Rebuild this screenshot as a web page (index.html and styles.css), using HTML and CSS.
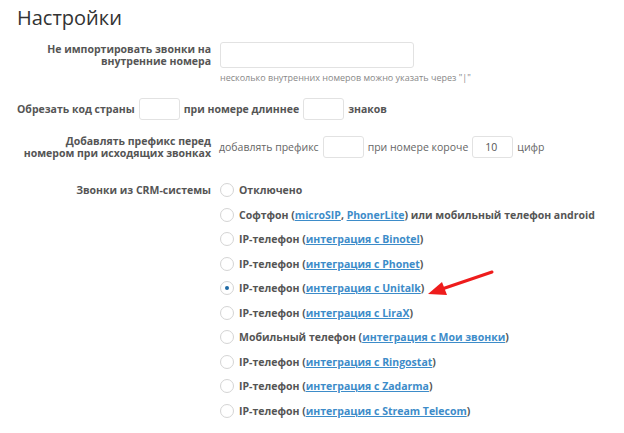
FILE: index.html
```html
<!DOCTYPE html>
<html lang="ru">
<head>
<meta charset="utf-8">
<title>Настройки</title>
<link rel="stylesheet" href="styles.css">
</head>
<body>
<div class="page">
  <h1 class="title">Настройки</h1>

  <div class="row row-first">
    <div class="label">Не импортировать звонки на<br>внутренние номера</div>
    <div class="field">
      <input class="inp inp-wide" type="text">
    </div>
  </div>
  <div class="hint">несколько внутренних номеров можно указать через "|"</div>

  <div class="row row-trim">
    <div class="inline">
      <span class="blabel">Обрезать код страны</span>
      <input class="inp inp-small" type="text">
      <span class="blabel">при номере длиннее</span>
      <input class="inp inp-small" type="text">
      <span class="blabel">знаков</span>
    </div>
  </div>

  <div class="row row-prefix">
    <div class="label">Добавлять префикс перед<br>номером при исходящих звонках</div>
    <div class="field inline">
      <span class="nlabel">добавлять префикс</span>
      <input class="inp inp-small" type="text">
      <span class="nlabel">при номере короче</span>
      <input class="inp inp-small" type="text" value="10">
      <span class="nlabel">цифр</span>
    </div>
  </div>

  <div class="row row-crm">
    <div class="label label-top">Звонки из CRM-системы</div>
    <div class="options">
      <div class="opt"><span class="radio"></span><span class="otext">Отключено</span></div>
      <div class="opt"><span class="radio"></span><span class="otext">Софтфон (<a href="#">microSIP</a>, <a href="#">PhonerLite</a>) или мобильный телефон android</span></div>
      <div class="opt"><span class="radio"></span><span class="otext">IP-телефон (<a href="#">интеграция с Binotel</a>)</span></div>
      <div class="opt"><span class="radio"></span><span class="otext">IP-телефон (<a href="#">интеграция с Phonet</a>)</span></div>
      <div class="opt"><span class="radio checked"></span><span class="otext">IP-телефон (<a href="#">интеграция с Unitalk</a>)</span></div>
      <div class="opt"><span class="radio"></span><span class="otext">IP-телефон (<a href="#">интеграция с LiraX</a>)</span></div>
      <div class="opt"><span class="radio"></span><span class="otext">Мобильный телефон (<a href="#">интеграция с Мои звонки</a>)</span></div>
      <div class="opt"><span class="radio"></span><span class="otext">IP-телефон (<a href="#">интеграция с Ringostat</a>)</span></div>
      <div class="opt"><span class="radio"></span><span class="otext">IP-телефон (<a href="#">интеграция с Zadarma</a>)</span></div>
      <div class="opt"><span class="radio"></span><span class="otext">IP-телефон (<a href="#">интеграция с Stream Telecom</a>)</span></div>
    </div>
  </div>

  <svg class="arrow" width="80" height="40" viewBox="0 0 80 40">
    <line x1="70" y1="7" x2="20" y2="24" stroke="#ee1c1c" stroke-width="3" stroke-linecap="round"/>
    <polygon points="6,29 20,17 25,30" fill="#ee1c1c"/>
  </svg>
</div>
</body>
</html>
```

FILE: styles.css
```css
* { box-sizing: border-box; }
html, body {
  margin: 0;
  padding: 0;
  background: #ffffff;
}
body {
  font-family: "Open Sans", "Liberation Sans", sans-serif;
  color: #555555;
  width: 624px;
  height: 433px;
  overflow: hidden;
}
.page {
  position: relative;
  padding: 0 0 0 17px;
}
.title {
  margin: 4px 0 0 0;
  font-size: 20px;
  line-height: 28px;
  font-weight: 400;
  color: #333333;
}
.row {
  display: flex;
  align-items: center;
}
.row-first { margin-top: 10px; }
.label {
  width: 194px;
  margin-right: 8px;
  text-align: right;
  font-weight: 700;
  font-size: 10.5px;
  line-height: 12.5px;
  color: #555555;
  flex: none;
  white-space: nowrap;
}
.label-top { align-self: flex-start; line-height: 14px; }
.field { display: flex; align-items: center; }
.inp {
  border: 1px solid #e2e2e2;
  border-radius: 3px;
  background: #fff;
  font-family: "Open Sans", "Liberation Sans", sans-serif;
  font-size: 10.5px;
  color: #555;
  padding: 0 0 0 12px;
  outline: none;
  margin: 0;
}
.inp-wide { width: 194px; height: 26px; margin-left: 1px; }
.inp-small { width: 41px; height: 22px; }
.hint {
  margin: 4px 0 0 203px;
  font-size: 9px;
  line-height: 12px;
  color: #888888;
}
.row-trim { margin-top: 14px; }
.inline { display: flex; align-items: center; gap: 4px; }
.blabel { font-weight: 700; font-size: 10.5px; color: #555; white-space: nowrap; }
.nlabel { font-weight: 400; font-size: 10.5px; color: #666; white-space: nowrap; }
.row-prefix { margin-top: 16px; height: 22px; }
.row-prefix .label { margin-top: 0; }
.row-crm { margin-top: 25px; align-items: flex-start; }
.options {
  display: flex;
  flex-direction: column;
  gap: 10.55px;
  margin-left: 1px;
}
.opt {
  display: flex;
  align-items: center;
  height: 14px;
  font-weight: 700;
  font-size: 10.5px;
  line-height: 14px;
  color: #555555;
  white-space: nowrap;
}
.opt a {
  color: #3d8cc9;
  text-decoration: underline;
}
.radio {
  width: 14px;
  height: 14px;
  border: 1px solid #d4d4d4;
  border-radius: 50%;
  margin-right: 5px;
  position: relative;
  flex: none;
  background: #fff;
}
.radio.checked::after {
  content: "";
  position: absolute;
  left: 4px;
  top: 4px;
  width: 4px;
  height: 4px;
  border-radius: 50%;
  background: #1f6aa5;
}
.arrow {
  position: absolute;
  left: 422px;
  top: 261px;
}
```
